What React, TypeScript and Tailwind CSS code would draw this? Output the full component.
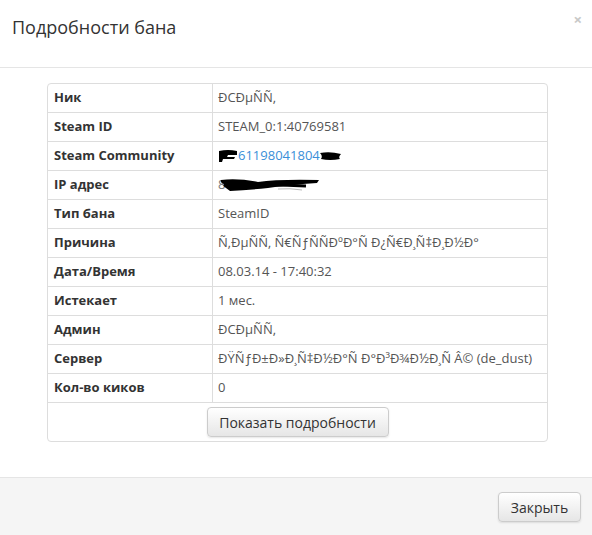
import React from 'react';

const font = { fontFamily: '"Open Sans", "Liberation Sans", sans-serif' };

function Scribble1() {
  return (
    <svg width="20" height="14" viewBox="0 0 20 14" className="shrink-0">
      <path d="M1 2 Q10 0 19 2 L19 6 L10 6 L9 8 L17 8 L16 10 L5 10 L4 13 L1 13 Z" fill="#000" />
    </svg>
  );
}

function Scribble2() {
  return (
    <svg width="22" height="10" viewBox="0 0 22 10" className="shrink-0">
      <path d="M0 2 Q10 0 21 3 Q18 6 20 8 Q10 10 1 8 Q3 5 0 2 Z" fill="#000" />
    </svg>
  );
}

function IpValue() {
  return (
    <span className="relative inline-flex items-center h-[18px] w-[104px]">
      <span className="text-[#777]">8</span>
      <svg width="104" height="18" viewBox="0 0 104 18" className="absolute left-0 top-0">
        <path d="M3 4 Q20 2 40 6 Q60 3 101 4 L99 7 Q70 9 50 12 Q30 14 12 15 L8 12 Q4 10 6 8 Q2 7 3 4 Z" fill="#000" />
        <path d="M20 10 Q50 8 88 10" stroke="#000" strokeWidth="3" fill="none" />
        <path d="M60 13 Q72 12 84 14" stroke="#bbb" strokeWidth="1" fill="none" />
      </svg>
    </span>
  );
}

export default function App() {
  const rows: { label: string; value: React.ReactNode }[] = [
    { label: 'Ник', value: 'ÐСÐµÑÑ,' },
    { label: 'Steam ID', value: 'STEAM_0:1:40769581' },
    {
      label: 'Steam Community',
      value: (
        <span className="flex items-center">
          <Scribble1 />
          <span className="text-[#3a8fd8]">61198041804</span>
          <Scribble2 />
        </span>
      ),
    },
    { label: 'IP адрес', value: <IpValue /> },
    { label: 'Тип бана', value: 'SteamID' },
    { label: 'Причина', value: 'Ñ‚ÐµÑÑ‚ Ñ€ÑƒÑÑÐºÐ°Ñ Ð¿Ñ€Ð¸Ñ‡Ð¸Ð½Ð°' },
    { label: 'Дата/Время', value: '08.03.14 - 17:40:32' },
    { label: 'Истекает', value: '1 мес.' },
    { label: 'Админ', value: 'ÐСÐµÑÑ,' },
    { label: 'Сервер', value: 'ÐŸÑƒÐ±Ð»Ð¸Ñ‡Ð½Ð°Ñ Ð°Ð³Ð¾Ð½Ð¸Ñ Â© (de_dust)' },
    { label: 'Кол-во киков', value: '0' },
  ];

  return (
    <div className="w-[592px] h-[535px] bg-white flex flex-col text-[#333]" style={font}>
      <div className="relative h-[68px] border-b border-[#e5e5e5] flex items-center px-3">
        <h4 className="text-[18px] leading-none pb-[14px]">Подробности бана</h4>
        <span className="absolute right-[10px] top-[8px] text-[#c8c8c8] text-[15px] font-bold">×</span>
      </div>

      <div className="flex-1 pl-[47px] pt-[15px]">
        <div className="w-[501px] border border-[#ddd] rounded-[4px] text-[13px]">
          {rows.map((r) => (
            <div key={r.label} className="flex h-[29px] border-b border-[#ddd]">
              <div className="w-[165px] border-r border-[#ddd] flex items-center px-[6px] font-bold text-[#333]">
                {r.label}
              </div>
              <div className="flex-1 flex items-center px-[5px] text-[#555]">{r.value}</div>
            </div>
          ))}
          <div className="flex justify-center pt-[4px] pb-[4px]">
            <button className="h-[30px] w-[182px] rounded-[4px] border border-[#ccc] bg-gradient-to-b from-white to-[#e6e6e6] text-[14px] text-[#333] shadow-[0_1px_2px_rgba(0,0,0,0.1)]">
              Показать подробности
            </button>
          </div>
        </div>
      </div>

      <div className="h-[58px] border-t border-[#e5e5e5] bg-[#f5f5f5] flex items-start justify-end pr-[11px] pt-[14px]">
        <button className="h-[30px] w-[83px] rounded-[4px] border border-[#ccc] bg-gradient-to-b from-white to-[#e6e6e6] text-[14px] text-[#333] shadow-[0_1px_2px_rgba(0,0,0,0.1)]">
          Закрыть
        </button>
      </div>
    </div>
  );
}
